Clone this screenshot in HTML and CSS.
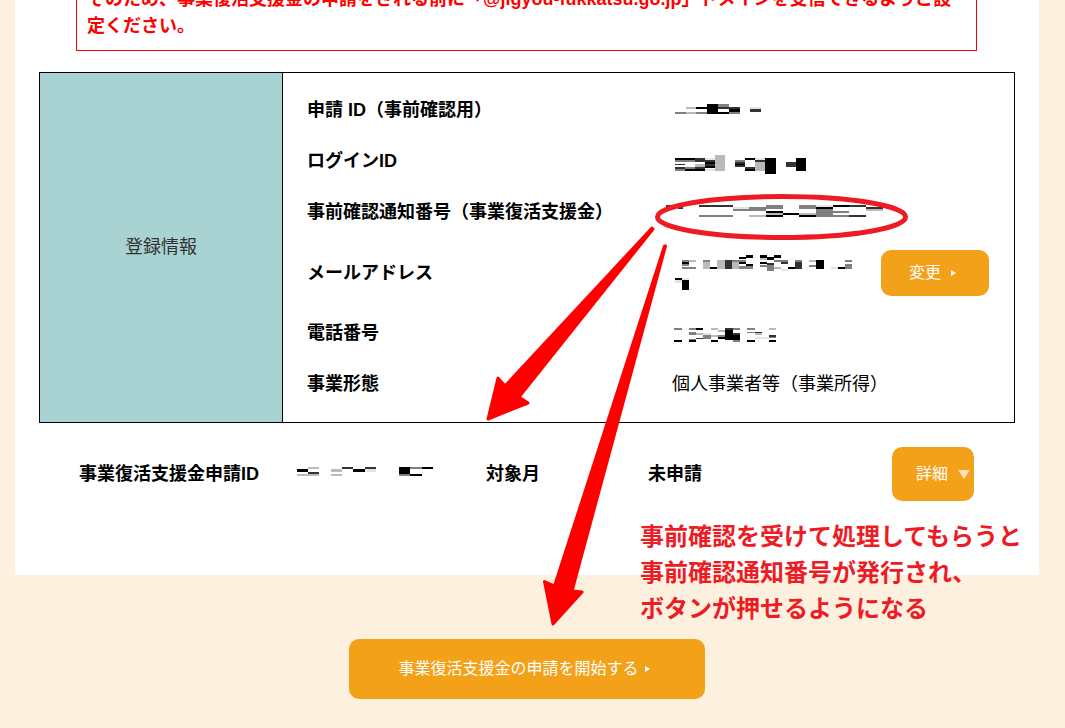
FILE: index.html
```
<!DOCTYPE html>
<html lang="ja">
<head>
  <meta charset="UTF-8">
  <title>事業復活支援金 マイページ</title>
  <link rel="stylesheet" href="styles.css">
</head>
<body>

  <main class="panel">
    <p class="notice">そのため、事業復活支援金の申請をされる前に「@jigyou-fukkatsu.go.jp」ドメインを受信できるようご設定ください。</p>

    <section class="info">
      <h2 class="info-title">登録情報</h2>
      <div class="info-body">
        <table class="info-table">
          <colgroup>
            <col class="col-label">
            <col>
            <col class="col-action">
          </colgroup>
          <tr>
            <th scope="row">申請 ID（事前確認用）</th>
            <td colspan="2">
              <svg class="mosaic" width="90" height="30" viewBox="36 18 270 90">
                <path class="k" d="M108 51h33v6h-33zM141 42h33v30h-33zM174 66h33v6h-33zM207 57h33v9h-33z"/>
                <path class="d" d="M174 51h66v6h-66zM270 57h33v9h-33z"/>
                <path class="g" d="M45 66h33v6h-33zM108 66h33v6h-33zM174 42h33v9h-33zM207 66h33v6h-33z"/>
                <path class="l" d="M78 51h30v6h-30zM78 66h30v6h-30z"/>
                <path class="w" d="M270 51h33v6h-33z"/>
              </svg>
            </td>
          </tr>
          <tr>
            <th scope="row">ログインID</th>
            <td colspan="2">
              <svg class="mosaic" width="135" height="30" viewBox="36 171 405 90">
                <path class="k" d="M45 204h60v6h-60zM135 216h30v6h-30zM135 228h30v6h-30zM75 237h60v6h-60zM255 204h30v6h-30zM255 237h30v6h-30zM225 222h30v3h-30zM315 204h33v48h-33zM408 204h30v39h-30z"/>
                <path class="d" d="M105 204h30v6h-30zM105 210h60v6h-60zM45 222h30v3h-30zM135 222h30v6h-30zM45 231h30v6h-30zM105 231h30v6h-30zM225 216h30v6h-30zM225 225h30v6h-30zM255 231h30v6h-30zM285 210h30v6h-30zM378 216h30v15h-30z"/>
                <path class="g" d="M45 210h30v6h-30zM45 237h30v6h-30zM75 210h30v6h-30zM75 231h30v6h-30zM225 210h30v6h-30z"/>
                <path class="l" d="M105 222h30v9h-30zM165 195h30v48h-30zM285 216h30v27h-30z"/>
                <path class="w" d="M135 204h30v6h-30zM135 237h30v6h-30zM285 204h30v6h-30z"/>
              </svg>
            </td>
          </tr>
          <tr>
            <th scope="row">事前確認通知番号（事業復活支援金）</th>
            <td colspan="2">
              <svg class="mosaic" width="209" height="30" viewBox="66 24 627 90">
                <path class="k" d="M348 63h51v6h-51zM348 75h51v6h-51zM399 69h48v6h-48zM447 75h51v6h-51zM498 51h51v6h-51zM549 45h48v6h-48z"/>
                <path class="d" d="M48 45h36v6h-36zM84 51h15v6h-15zM147 45h102v6h-102zM597 45h51v6h-51zM597 75h51v6h-51zM648 51h51v6h-51z"/>
                <path class="g" d="M147 75h102v6h-102zM249 57h99v6h-99zM297 51h102v6h-102zM348 45h51v6h-51zM447 45h51v12h-51zM498 57h51v24h-51zM549 63h48v6h-48zM549 75h48v6h-48z"/>
                <path class="l" d="M297 75h51v6h-51zM348 69h51v6h-51zM447 69h51v6h-51zM648 57h51v6h-51z"/>
                <path class="w" d="M249 51h48v6h-48zM498 45h51v6h-51z"/>
              </svg>
            </td>
          </tr>
          <tr class="mail-row">
            <th scope="row">メールアドレス</th>
            <td>
              <svg class="mosaic" width="185" height="40" viewBox="36 24 555 120">
                <path class="k" d="M66 51h21v6h-21zM150 66h21v6h-21zM237 36h21v6h-21zM258 30h21v9h-21zM237 51h21v6h-21zM258 57h21v6h-21zM300 30h21v9h-21zM342 30h21v9h-21zM321 36h21v6h-21zM300 51h21v6h-21zM321 39h21v6h-21zM384 66h21v6h-21zM468 45h24v27h-24zM534 66h21v6h-21zM45 99h21v6h-21zM66 105h21v30h-21z"/>
                <path class="d" d="M195 45h21v27h-21zM405 51h21v21h-21zM321 54h21v6h-21zM363 51h21v6h-21z"/>
                <path class="g" d="M66 45h21v6h-21zM66 57h21v6h-21zM66 66h42v6h-42zM129 45h21v6h-21zM216 45h42v6h-42zM237 63h42v9h-42zM300 60h42v6h-42zM321 66h21v12h-21zM342 45h42v6h-42zM405 45h21v6h-21zM447 60h21v6h-21zM555 45h21v6h-21zM555 57h21v15h-21z"/>
                <path class="l" d="M87 45h21v6h-21zM129 51h21v21h-21zM171 45h24v27h-24zM216 51h21v21h-21zM300 39h21v6h-21zM342 66h21v6h-21zM447 45h21v6h-21z"/>
                <path class="w" d="M363 72h21v6h-21zM513 66h21v6h-21zM45 105h21v9h-21zM66 99h21v6h-21z"/>
              </svg>
            </td>
            <td><button class="btn change" type="button">変更<span class="arrow"></span></button></td>
          </tr>
          <tr>
            <th scope="row">電話番号</th>
            <td colspan="2">
              <svg class="mosaic" width="105" height="30" viewBox="36 12 315 90">
                <path class="k" d="M42 75h24v6h-24zM87 75h21v6h-21zM108 39h21v6h-21zM153 75h21v6h-21zM195 42h24v33h-24zM219 60h21v15h-21zM174 66h21v6h-21zM261 75h24v6h-24zM327 75h21v6h-21z"/>
                <path class="d" d="M108 69h21v3h-21zM195 39h24v6h-24zM219 54h21v6h-21zM285 51h21v3h-21zM327 60h21v6h-21z"/>
                <path class="g" d="M42 39h24v6h-24zM87 39h21v6h-21zM87 51h21v9h-21zM87 72h21v3h-21zM129 60h24v12h-24zM174 60h21v6h-21zM219 39h21v6h-21zM219 75h21v6h-21zM261 39h24v6h-24zM261 51h24v3h-24zM327 66h21v3h-21z"/>
                <path class="l" d="M108 54h21v6h-21zM153 39h21v6h-21zM153 60h21v6h-21zM174 45h21v6h-21zM285 54h21v6h-21zM327 39h21v6h-21z"/>
                <path class="w" d="M129 54h24v6h-24zM285 66h42v6h-42z"/>
              </svg>
            </td>
          </tr>
          <tr>
            <th scope="row">事業形態</th>
            <td colspan="2">個人事業者等（事業所得）</td>
          </tr>
        </table>
      </div>
    </section>

    <section class="application">
      <span>事業復活支援金申請ID</span>
      <span>
        <svg class="mosaic" width="138" height="30" viewBox="48 27 414 90">
          <path class="k" d="M51 57h33v9h-33zM219 57h36v9h-36zM357 51h33v21h-33zM390 72h36v6h-36zM426 51h33v6h-33z"/>
          <path class="d" d="M84 66h33v6h-33zM186 51h33v6h-33zM255 51h33v6h-33z"/>
          <path class="g" d="M357 72h33v6h-33zM390 51h36v6h-36z"/>
          <path class="l" d="M51 72h66v6h-66zM84 51h33v6h-33zM153 57h33v9h-33zM153 72h33v6h-33z"/>
          <path class="w" d="M255 57h33v9h-33z"/>
        </svg>
      </span>
      <span>対象月</span>
      <span>未申請</span>
      <button class="btn detail" type="button">詳細<span class="arrow-down"></span></button>
    </section>
  </main>

  <div class="start-area">
    <button class="btn start" type="button">事業復活支援金の申請を開始する<span class="arrow"></span></button>
  </div>

  <!-- 説明用の書き込み -->
  <svg class="marks" width="1065" height="728" viewBox="0 0 1065 728">
    <ellipse cx="781.5" cy="217" rx="124" ry="20.5"/>
    <path d="M652 228L505 386L498 378L488 419L528 403L519 397L653 229Z"/>
    <path d="M664.500 246L554.500 586L544.500 581.500L553 624L582 592L572 591L665.500 246Z"/>
  </svg>
  <p class="memo">事前確認を受けて処理してもらうと<br>事前確認通知番号が発行され、<br>ボタンが押せるようになる</p>

</body>
</html>
```

FILE: styles.css
```
* {
  box-sizing: border-box;
}

body {
  position: relative;
  margin: 0;
  background-color: #fef0de;
  color: #000;
  font-family: "Liberation Sans", "Noto Sans CJK JP", sans-serif;
  font-size: 18px;
  line-height: 27px;
}

.panel {
  display: flow-root;
  margin: 0 26px 0 15px;
  padding: 0 24px 74px;
  background-color: #fff;
}

.notice {
  margin: -14px 38px 21px 37px;
  padding: 0 10px 10px;
  border: 1px solid #f00;
  border-top: none;
  color: #f00;
  font-weight: bold;
}

.info {
  display: flex;
  border: 1px solid #000;
}

.info-title {
  display: flex;
  align-items: center;
  justify-content: center;
  flex: 0 0 243px;
  margin: 0;
  border-right: 1px solid #000;
  background-color: #a9d3d2;
  color: #333;
  font-size: 18px;
  font-weight: normal;
}

.info-body {
  flex: 1;
  padding: 12px 25px 12px 24px;
}

.info-table {
  width: 100%;
  table-layout: fixed;
  border-collapse: collapse;
}

.col-label {
  width: 365px;
}

.col-action {
  width: 108px;
}

.info-table tr {
  height: 51px;
}

.info-table .mail-row {
  height: 70px;
}

.info-table th,
.info-table td {
  padding: 0;
  text-align: left;
}

.mosaic {
  display: block;
  overflow: visible;
  shape-rendering: crispEdges;
}

.k { fill: #000; }
.d { fill: #333; }
.g { fill: #808080; }
.l { fill: #bababa; }
.w { fill: #e4e4e4; }

.application {
  display: grid;
  grid-template-columns: 217fr 190fr 162fr 244fr 82px;
  align-items: center;
  margin: 24px 41px 0 40px;
  font-weight: bold;
}

.btn {
  display: flex;
  align-items: center;
  padding: 0 0 4px;
  border: none;
  border-radius: 10px;
  background-color: #f4a11a;
  color: #fff;
  font-family: inherit;
  font-size: 16px;
  cursor: pointer;
}

.change {
  width: 108px;
  height: 46px;
  padding-left: 28px;
}

.detail {
  width: 82px;
  height: 54px;
  padding-left: 24px;
}

.start {
  justify-content: center;
  width: 356px;
  height: 60px;
}

.arrow {
  margin: 4px 0 0 10px;
  border: 3px solid transparent;
  border-left: 5px solid #fff;
  border-right: none;
}

.start .arrow {
  margin-left: 6px;
  margin-right: 6px;
}

.arrow-down {
  margin: 4px 0 0 10px;
  border: 6px solid transparent;
  border-top: 9px solid #fcdfb4;
  border-bottom: none;
}

.start-area {
  display: flex;
  justify-content: center;
  margin: 64px 26px 0 15px;
  padding-bottom: 29px;
}

.marks {
  position: absolute;
  top: 0;
  left: 0;
  pointer-events: none;
}

.marks ellipse {
  fill: none;
  stroke: #ed1c24;
  stroke-width: 5;
}

.marks path {
  fill: #f00;
  stroke: #f00;
  stroke-width: 3;
  stroke-linejoin: round;
}

.memo {
  position: absolute;
  top: 519px;
  left: 640px;
  margin: 0;
  color: #ed1c24;
  font-size: 24px;
  font-weight: bold;
  line-height: 36px;
  white-space: nowrap;
  pointer-events: none;
}
```
